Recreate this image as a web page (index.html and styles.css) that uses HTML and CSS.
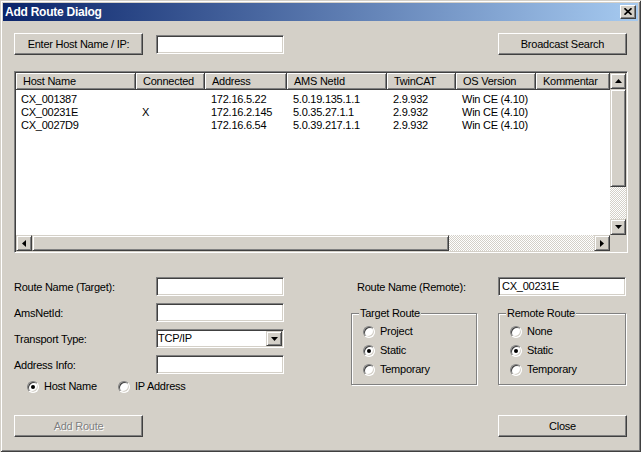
FILE: index.html
```html
<!DOCTYPE html>
<html>
<head>
<meta charset="utf-8">
<title>Add Route Dialog</title>
<link rel="stylesheet" href="styles.css">
</head>
<body>
<div class="window">
  <div class="titlebar">
    <span class="title">Add Route Dialog</span>
    <span class="close-btn"><svg width="8" height="7" viewBox="0 0 8 7"><path d="M0.5 0.3 L7.5 6.7 M7.5 0.3 L0.5 6.7" stroke="#000" stroke-width="1.7" fill="none"/></svg></span>
  </div>
  <div class="body">
    <div class="toprow">
      <div class="host-group">
        <div class="btn">Enter Host Name / IP:</div>
        <div class="sunken field host-field"></div>
      </div>
      <div class="btn btn-right">Broadcast Search</div>
    </div>

    <div class="sunken listview">
      <div class="lv-main">
        <div class="lv-content">
          <div class="lv-header">
            <div class="hcell c1">Host Name</div>
            <div class="hcell c2">Connected</div>
            <div class="hcell c3">Address</div>
            <div class="hcell c4">AMS NetId</div>
            <div class="hcell c5">TwinCAT</div>
            <div class="hcell c6">OS Version</div>
            <div class="hcell c7">Kommentar</div>
          </div>
          <div class="lv-rows">
            <div class="row">
              <div class="cell c1">CX_001387</div><div class="cell c2"></div><div class="cell c3">172.16.5.22</div><div class="cell c4">5.0.19.135.1.1</div><div class="cell c5">2.9.932</div><div class="cell c6">Win CE (4.10)</div><div class="cell c7"></div>
            </div>
            <div class="row">
              <div class="cell c1">CX_00231E</div><div class="cell c2">X</div><div class="cell c3">172.16.2.145</div><div class="cell c4">5.0.35.27.1.1</div><div class="cell c5">2.9.932</div><div class="cell c6">Win CE (4.10)</div><div class="cell c7"></div>
            </div>
            <div class="row">
              <div class="cell c1">CX_0027D9</div><div class="cell c2"></div><div class="cell c3">172.16.6.54</div><div class="cell c4">5.0.39.217.1.1</div><div class="cell c5">2.9.932</div><div class="cell c6">Win CE (4.10)</div><div class="cell c7"></div>
            </div>
          </div>
        </div>
        <div class="vscroll">
          <div class="raised sbtn"><svg width="7" height="4" viewBox="0 0 7 4"><polygon points="3.5,0 7,4 0,4" fill="#000"/></svg></div>
          <div class="raised vthumb"></div>
          <div class="track"></div>
          <div class="raised sbtn"><svg width="7" height="4" viewBox="0 0 7 4"><polygon points="0,0 7,0 3.5,4" fill="#000"/></svg></div>
        </div>
      </div>
      <div class="hscroll">
        <div class="raised sbtn"><svg width="4" height="7" viewBox="0 0 4 7"><polygon points="4,0 4,7 0,3.5" fill="#000"/></svg></div>
        <div class="raised hthumb"></div>
        <div class="track"></div>
        <div class="raised sbtn"><svg width="4" height="7" viewBox="0 0 4 7"><polygon points="0,0 0,7 4,3.5" fill="#000"/></svg></div>
        <div class="corner"></div>
      </div>
    </div>

    <div class="form">
      <div class="form-left">
        <div class="frow"><span class="flabel">Route Name (Target):</span><div class="sunken field finput"></div></div>
        <div class="frow"><span class="flabel">AmsNetId:</span><div class="sunken field finput"></div></div>
        <div class="frow"><span class="flabel">Transport Type:</span>
          <div class="sunken field finput combo"><span class="combo-text">TCP/IP</span><span class="raised dropbtn"><svg width="7" height="4" viewBox="0 0 7 4"><polygon points="0,0 7,0 3.5,4" fill="#000"/></svg></span></div>
        </div>
        <div class="frow"><span class="flabel">Address Info:</span><div class="sunken field finput"></div></div>
        <div class="radio-row">
          <div class="ritem ritem-wide"><span class="radio checked"></span><span>Host Name</span></div>
          <div class="ritem"><span class="radio"></span><span>IP Address</span></div>
        </div>
      </div>
      <div class="form-right">
        <div class="rrow"><span>Route Name (Remote):</span><div class="sunken field finput"><span class="ftext">CX_00231E</span></div></div>
        <div class="groups">
          <div class="group group-target">
            <div class="legend">Target Route</div>
            <div class="gradios">
              <div class="ritem grow"><span class="radio"></span><span>Project</span></div>
              <div class="ritem grow"><span class="radio checked"></span><span>Static</span></div>
              <div class="ritem grow"><span class="radio"></span><span>Temporary</span></div>
            </div>
          </div>
          <div class="group group-remote">
            <div class="legend">Remote Route</div>
            <div class="gradios">
              <div class="ritem grow"><span class="radio"></span><span>None</span></div>
              <div class="ritem grow"><span class="radio checked"></span><span>Static</span></div>
              <div class="ritem grow"><span class="radio"></span><span>Temporary</span></div>
            </div>
          </div>
        </div>
      </div>
    </div>

    <div class="bottomrow">
      <div class="btn disabled">Add Route</div>
      <div class="btn btn-right">Close</div>
    </div>
  </div>
</div>
</body>
</html>
```

FILE: styles.css
```css
* { box-sizing: border-box; }
html, body { margin: 0; padding: 0; background: #D4D0C8; }
body { font: 11px "Liberation Sans", Arial, sans-serif; color: #000; letter-spacing: -0.25px; }

.window {
  width: 641px;
  height: 452px;
  padding: 3px;
  background: #D4D0C8;
  box-shadow: inset 1px 1px #D4D0C8, inset -1px -1px #404040, inset 2px 2px #fff, inset -2px -2px #808080;
  overflow: hidden;
}

.titlebar {
  height: 18px;
  display: flex;
  align-items: center;
  padding: 0 2px;
  background: linear-gradient(to right, #0A246A, #A6CAF0);
}
.title {
  color: #fff;
  font-weight: bold;
  font-size: 12px;
  line-height: 18px;
  letter-spacing: -0.25px;
}
.close-btn {
  margin-left: auto;
  width: 16px;
  height: 14px;
  display: flex;
  align-items: center;
  justify-content: center;
  background: #D4D0C8;
  border: 1px solid;
  border-color: #fff #404040 #404040 #fff;
  box-shadow: inset -1px -1px #808080;
}
.close-btn svg { display: block; margin-top: -1px; }

.body { padding: 12px 10px 0 11px; }

.toprow {
  display: flex;
  justify-content: space-between;
  align-items: flex-start;
  height: 22px;
}
.host-group { display: flex; align-items: flex-start; }

.btn {
  width: 129px;
  height: 22px;
  display: flex;
  align-items: center;
  justify-content: center;
  background: #D4D0C8;
  border: 1px solid;
  border-color: #fff #404040 #404040 #fff;
  box-shadow: inset -1px -1px #808080;
  white-space: nowrap;
}
.btn-right { margin-right: 1px; }
.btn.disabled { color: #808080; text-shadow: 1px 1px 0 #fff; }

.sunken {
  border: 1px solid;
  border-color: #808080 #fff #fff #808080;
  padding: 1px;
  box-shadow: inset 1px 1px #404040, inset -1px -1px #D4D0C8;
}
.field { background: #fff; }
.host-field { margin-left: 13px; margin-top: 2px; width: 128px; height: 19px; }

.raised {
  background: #D4D0C8;
  border: 1px solid;
  border-color: #D4D0C8 #404040 #404040 #D4D0C8;
  box-shadow: inset 1px 1px #fff, inset -1px -1px #808080;
}

/* List view */
.listview {
  margin-top: 16px;
  width: 614px;
  height: 182px;
  background: #fff;
}
.lv-main { display: flex; height: 162px; }
.lv-content { flex: 1; min-width: 0; background: #fff; overflow: hidden; }
.lv-header { display: flex; height: 17px; }
.hcell {
  flex: none;
  height: 17px;
  background: #D4D0C8;
  border-right: 1px solid #404040;
  border-bottom: 1px solid #404040;
  box-shadow: inset 1px 1px #fff, inset -1px -1px #808080;
  padding-left: 7px;
  line-height: 16px;
  white-space: nowrap;
  overflow: hidden;
}
.c1 { width: 120px; }
.c2 { width: 69px; }
.c3 { width: 82px; }
.c4 { width: 100px; }
.c5 { width: 69px; }
.c6 { width: 80px; }
.c7 { width: 74px; }
.lv-rows { padding-top: 3px; }
.row { display: flex; height: 13px; line-height: 13px; }
.cell { flex: none; padding-left: 6px; white-space: nowrap; overflow: hidden; }
.cell.c1 { padding-left: 5px; }

.vscroll { width: 16px; flex: none; display: flex; flex-direction: column; }
.sbtn {
  width: 16px;
  height: 16px;
  flex: none;
  display: flex;
  align-items: center;
  justify-content: center;
}
.sbtn svg { display: block; }
.vthumb { height: 98px; flex: none; }
.track {
  flex: 1;
  background: repeating-conic-gradient(#fff 0 25%, #D4D0C8 0 50%) 0 0 / 2px 2px;
}
.hscroll { display: flex; height: 16px; }
.hthumb { width: 417px; flex: none; }
.corner { width: 16px; flex: none; background: #D4D0C8; }

/* Form */
.form { display: flex; gap: 67px; margin-top: 24px; }
.form-left { width: 270px; flex: none; }
.frow { display: flex; align-items: center; height: 19px; margin-bottom: 7px; }
.frow:nth-child(4) { margin-bottom: 0; }
.flabel { width: 142px; flex: none; white-space: nowrap; }
.finput { width: 128px; height: 19px; flex: none; line-height: 15px; }
.ftext { padding-left: 2px; }
.combo { display: flex; align-items: center; justify-content: space-between; }
.combo-text { padding-left: 0; }
.dropbtn {
  width: 16px;
  height: 15px;
  display: flex;
  align-items: center;
  justify-content: center;
}
.dropbtn svg { display: block; }

.radio-row {
  display: flex;
  align-items: center;
  height: 13px;
  margin-top: 6px;
  padding-left: 13px;
}
.ritem { display: flex; align-items: center; gap: 5px; line-height: 13px; white-space: nowrap; }
.ritem-wide { width: 91px; }
.radio {
  width: 12px;
  height: 12px;
  flex: none;
  border-radius: 50%;
  background: #fff;
  border: 1px solid;
  border-color: #808080 #fff #fff #808080;
  box-shadow: inset 1px 1px #404040, inset -1px -1px #D4D0C8;
  display: flex;
  align-items: center;
  justify-content: center;
}
.radio.checked::after {
  content: "";
  width: 4px;
  height: 4px;
  border-radius: 50%;
  background: #000;
}

.form-right { width: 275px; flex: none; }
.rrow {
  display: flex;
  justify-content: space-between;
  align-items: center;
  height: 19px;
  padding-left: 6px;
}
.groups { display: flex; justify-content: space-between; margin-top: 17px; }
.group {
  height: 72px;
  border: 1px solid #808080;
  box-shadow: inset 1px 1px #fff, 1px 1px #fff;
}
.group-target { width: 126px; }
.group-remote { width: 128px; }
.legend {
  width: fit-content;
  margin: -7px 0 0 7px;
  padding: 0 1px;
  background: #D4D0C8;
  line-height: 13px;
  white-space: nowrap;
}
.gradios { padding: 2px 0 0 11px; }
.grow { height: 19px; }

.bottomrow {
  display: flex;
  justify-content: space-between;
  margin-top: 22px;
}
```
